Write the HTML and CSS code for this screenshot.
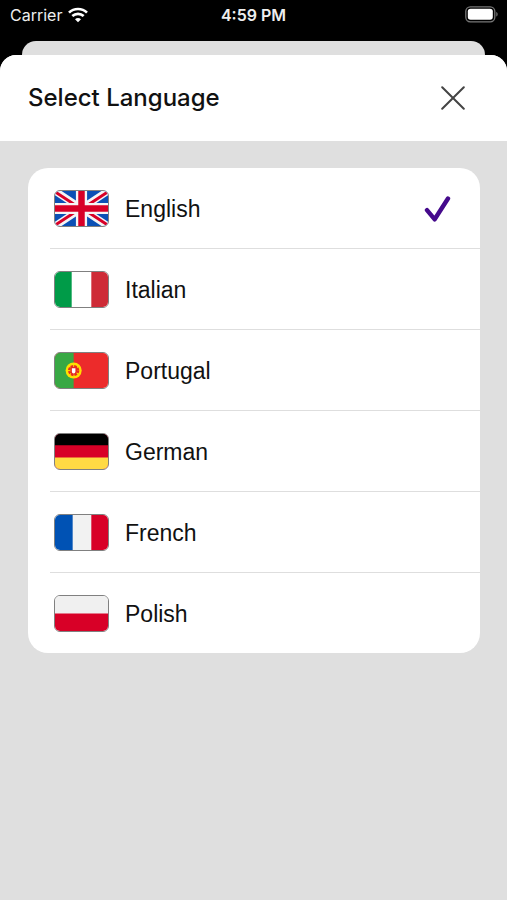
FILE: index.html
```html
<!DOCTYPE html>
<html lang="en">
<head>
<meta charset="utf-8">
<meta name="viewport" content="width=device-width, initial-scale=1">
<title>Select Language</title>
<link rel="stylesheet" href="styles.css">
</head>
<body>
<div class="status">
  <div class="status-left">
    <span>Carrier</span>
    <svg class="wifi" width="20" height="16" viewBox="0 0 20 16" fill="none" stroke="#fff" stroke-width="2.7" aria-hidden="true">
      <path d="M1 5.6C6 .8 14 .8 19 5.6"/>
      <path d="M4.3 9.1c3.3-3 8.1-3 11.4 0"/>
      <path d="M10 15.2 7 12.2c1.7-1.5 4.3-1.5 6 0z" fill="#fff" stroke="none"/>
    </svg>
  </div>
  <time class="clock">4:59 PM</time>
  <div class="status-right">
    <svg width="34" height="17" viewBox="0 0 34 17" aria-hidden="true">
      <rect x=".8" y=".8" width="29" height="15" rx="4.5" fill="none" stroke="#777" stroke-width="1.3"/>
      <rect x="2.8" y="2.8" width="25" height="11" rx="2.8" fill="#fff"/>
      <path d="M31.3 6v4.6c1.8-.6 1.8-4 0-4.6z" fill="#777"/>
    </svg>
  </div>
</div>
<div class="back-sheet"></div>
<main class="sheet">
  <header class="header">
    <h1>Select Language</h1>
    <button class="close" type="button" aria-label="Close">
      <svg width="24" height="24" viewBox="0 0 24 24" fill="none" stroke="#444" stroke-width="2" stroke-linecap="round" aria-hidden="true"><path d="m1.2 1.2 21.6 21.6M22.8 1.2 1.2 22.8"/></svg>
    </button>
  </header>
  <form class="content">
    <div class="list" role="radiogroup" aria-label="Language">
      <label class="row">
        <span class="flag"><svg viewBox="0 0 54 36" preserveAspectRatio="none" aria-hidden="true">
          <path fill="#0b50b5" d="M0 0h54v36H0z"/>
          <path d="m0 0 54 36M54 0 0 36" stroke="#f5f5f5" stroke-width="7.4"/>
          <path d="m0 .8 24 16M54 35.2l-24-16M54 .8l-24 16M0 35.2l24-16" stroke="#d80027" stroke-width="3"/>
          <path d="M27 0v36M0 18h54" stroke="#f5f5f5" stroke-width="11.4"/>
          <path d="M27 0v36M0 18h54" stroke="#d80027" stroke-width="6.6"/>
        </svg></span>
        <span class="name">English</span>
        <input type="radio" name="language" value="en" checked>
        <svg class="check" width="28" height="28" viewBox="0 0 28 28" fill="none" stroke="#450a8c" stroke-width="4.4" stroke-linecap="round" stroke-linejoin="round" aria-hidden="true"><path d="m4 16.1 7.7 9.2L25 4.5"/></svg>
      </label>
      <label class="row">
        <span class="flag"><svg viewBox="0 0 54 36" preserveAspectRatio="none" aria-hidden="true">
          <path fill="#fff" d="M0 0h54v36H0z"/>
          <path fill="#009b48" d="M0 0h17v36H0z"/>
          <path fill="#ce2b37" d="M37 0h17v36H37z"/>
        </svg></span>
        <span class="name">Italian</span>
        <input type="radio" name="language" value="it">
        <svg class="check" width="28" height="28" viewBox="0 0 28 28" fill="none" stroke="#450a8c" stroke-width="4.4" stroke-linecap="round" stroke-linejoin="round" aria-hidden="true"><path d="m4 16.1 7.7 9.2L25 4.5"/></svg>
      </label>
      <label class="row">
        <span class="flag"><svg viewBox="0 0 54 36" preserveAspectRatio="none" aria-hidden="true">
          <path fill="#ec2b2b" d="M0 0h54v36H0z"/>
          <path fill="#38a844" d="M0 0h19v36H0z"/>
          <circle cx="19" cy="18" r="8.2" fill="#ffe000"/>
          <circle cx="19" cy="18" r="4.6" fill="none" stroke="#e42a24" stroke-width="2.4" stroke-dasharray="2.6 1.01"/>
          <path d="M15.6 14.4h6.8v4.4a3.4 3.4 0 0 1-6.8 0z" fill="#e42a24"/>
          <path d="M17.2 15.6h3.6v3.6a1.8 1.8 0 0 1-3.6 0z" fill="#fff"/>
        </svg></span>
        <span class="name">Portugal</span>
        <input type="radio" name="language" value="pt">
        <svg class="check" width="28" height="28" viewBox="0 0 28 28" fill="none" stroke="#450a8c" stroke-width="4.4" stroke-linecap="round" stroke-linejoin="round" aria-hidden="true"><path d="m4 16.1 7.7 9.2L25 4.5"/></svg>
      </label>
      <label class="row">
        <span class="flag"><svg viewBox="0 0 54 36" preserveAspectRatio="none" aria-hidden="true">
          <path fill="#d80027" d="M0 0h54v36H0z"/>
          <path fill="#000" d="M0 0h54v11.5H0z"/>
          <path fill="#ffda44" d="M0 24.2h54V36H0z"/>
        </svg></span>
        <span class="name">German</span>
        <input type="radio" name="language" value="de">
        <svg class="check" width="28" height="28" viewBox="0 0 28 28" fill="none" stroke="#450a8c" stroke-width="4.4" stroke-linecap="round" stroke-linejoin="round" aria-hidden="true"><path d="m4 16.1 7.7 9.2L25 4.5"/></svg>
      </label>
      <label class="row">
        <span class="flag"><svg viewBox="0 0 54 36" preserveAspectRatio="none" aria-hidden="true">
          <path fill="#f2f2f2" d="M0 0h54v36H0z"/>
          <path fill="#0052b4" d="M0 0h18v36H0z"/>
          <path fill="#d80027" d="M37 0h17v36H37z"/>
        </svg></span>
        <span class="name">French</span>
        <input type="radio" name="language" value="fr">
        <svg class="check" width="28" height="28" viewBox="0 0 28 28" fill="none" stroke="#450a8c" stroke-width="4.4" stroke-linecap="round" stroke-linejoin="round" aria-hidden="true"><path d="m4 16.1 7.7 9.2L25 4.5"/></svg>
      </label>
      <label class="row">
        <span class="flag"><svg viewBox="0 0 54 36" preserveAspectRatio="none" aria-hidden="true">
          <path fill="#f0f0f0" d="M0 0h54v36H0z"/>
          <path fill="#d80027" d="M0 18h54v18H0z"/>
        </svg></span>
        <span class="name">Polish</span>
        <input type="radio" name="language" value="pl">
        <svg class="check" width="28" height="28" viewBox="0 0 28 28" fill="none" stroke="#450a8c" stroke-width="4.4" stroke-linecap="round" stroke-linejoin="round" aria-hidden="true"><path d="m4 16.1 7.7 9.2L25 4.5"/></svg>
      </label>
    </div>
  </form>
</main>
</body>
</html>
```
FILE: styles.css
```css
* {
  box-sizing: border-box;
}

body {
  margin: 0;
  min-height: 100vh;
  display: flex;
  flex-direction: column;
  background: #000;
  color: #111;
  font-family: "Liberation Sans", Arial, sans-serif;
}

.status {
  display: grid;
  grid-template-columns: 1fr auto 1fr;
  align-items: center;
  height: 41px;
  padding: 0 8px 12px 8px;
  color: #eee;
  font: 400 16px/20px Inter, sans-serif;
}

.status-left {
  display: flex;
  align-items: center;
  gap: 6px;
  padding-left: 2px;
}

.clock {
  font-weight: 600;
}

.status-right {
  display: flex;
  justify-content: flex-end;
}

.back-sheet {
  height: 14px;
  margin: 0 22px;
  border-radius: 14px 14px 0 0;
  background: #dfdfdf;
}

.sheet {
  flex: 1;
  display: flex;
  flex-direction: column;
  overflow: hidden;
  border-radius: 16px 16px 0 0;
  background: #dfdfdf;
}

.header {
  display: flex;
  align-items: center;
  justify-content: space-between;
  height: 86px;
  padding: 0 38px 0 28px;
  background: #fff;
}

h1 {
  margin: 0;
  font: 500 24px/32px Inter, sans-serif;
}

.close {
  display: flex;
  padding: 4px;
  border: 0;
  background: none;
}

.content {
  padding: 27px 27px 40px 28px;
}

.list {
  overflow: hidden;
  border-radius: 20px;
  background: #fff;
}

.row {
  display: flex;
  align-items: center;
  height: 81px;
  margin-left: 22px;
  padding: 0 29px 0 4px;
  border-bottom: 1px solid #dedede;
}

.row:last-child {
  height: 80px;
  border-bottom: 0;
}

.flag {
  width: 55px;
  height: 37px;
  overflow: hidden;
  border: 1px solid #808080;
  border-radius: 6px;
}

.flag svg {
  display: block;
  width: 100%;
  height: 100%;
}

.name {
  flex: 1;
  margin-left: 16px;
  padding-top: 2px;
  font-size: 23px;
  line-height: 28px;
}

input {
  appearance: none;
  width: 0;
  height: 0;
  margin: 0;
}

.check {
  visibility: hidden;
}

input:checked + .check {
  visibility: visible;
}
```
